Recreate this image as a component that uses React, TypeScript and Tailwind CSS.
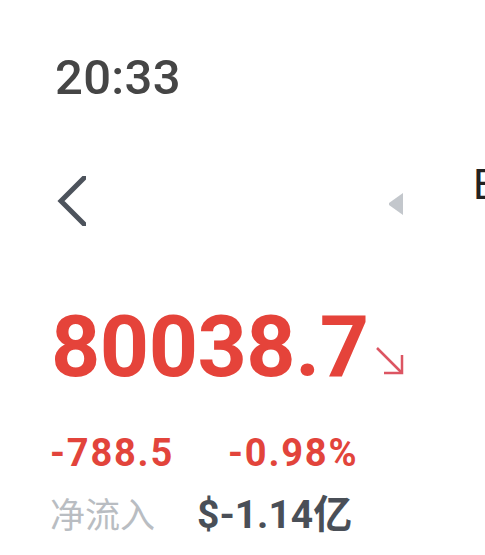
import React from 'react';

const ChevronLeft = () => (
  <svg width="29" height="50" viewBox="0 0 29 50" className="overflow-hidden">
    <polyline points="33,-4 4,25 33,54" fill="none" stroke="#4d535c" strokeWidth="5" strokeLinejoin="miter" />
  </svg>
);

const TriangleLeft = () => (
  <svg width="15" height="22" viewBox="0 0 15 22">
    <polygon points="15,0 15,22 1,12 1,10" fill="#c3c7cc" />
  </svg>
);

const ArrowDownRight = () => (
  <svg width="31" height="31" viewBox="0 0 31 31">
    <line x1="3" y1="3" x2="28" y2="28" stroke="#dc5562" strokeWidth="2.5" />
    <polyline points="28,10 28,28 10,28" fill="none" stroke="#dc5562" strokeWidth="2.5" />
  </svg>
);

export default function App() {
  return (
    <div className="w-[485px] h-[555px] bg-white overflow-hidden font-['Roboto','Noto_Sans_CJK_SC',sans-serif]">
      <div className="pl-[55px] pt-[53px] text-[49px] leading-none font-medium text-[#454545] tracking-[0.3px]">20:33</div>

      <div className="mt-[74px] flex items-center h-[50px]">
        <div className="ml-[57px]">
          <ChevronLeft />
        </div>
        <div className="ml-[302px] mt-[6px]">
          <TriangleLeft />
        </div>
        <div className="ml-[70px] -mt-[32px] text-[42px] leading-none font-normal text-[#222222] whitespace-nowrap">E</div>
      </div>

      <div className="mt-[78px] pl-[51px] flex items-baseline">
        <span className="text-[86px] leading-none font-bold text-[#e5433a] tracking-[-0.5px]">80038.7</span>
        <span className="ml-[5px]">
          <ArrowDownRight />
        </span>
      </div>

      <div className="mt-[44px] pl-[50px] flex text-[38px] leading-none font-bold text-[#e2443b] tracking-[1.8px]">
        <span className="w-[178px]">-788.5</span>
        <span>-0.98%</span>
      </div>

      <div className="mt-[24px] pl-[50px] flex items-baseline leading-none">
        <span className="w-[147px] text-[35px] text-[#b9bdc2]">净流入</span>
        <span className="text-[39px] font-bold text-[#4a4f57]">$-1.14亿</span>
      </div>
    </div>
  );
}
